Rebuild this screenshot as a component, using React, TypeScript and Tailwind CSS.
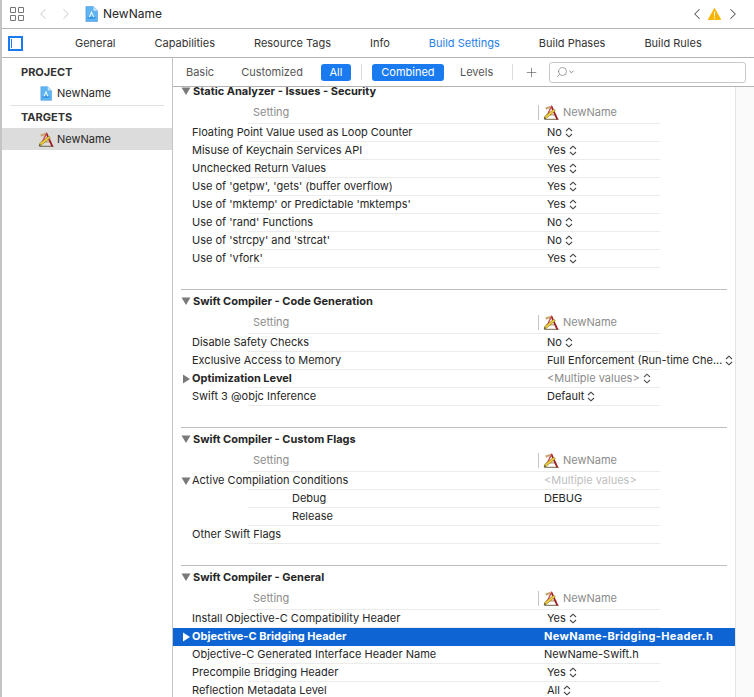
import { ChevronLeft, ChevronRight, Plus, Search } from 'lucide-react'

type Row = {
  label: string
  value?: string
  popup?: boolean
  bold?: boolean
  arrow?: 'right' | 'down'
  muted?: 'dim' | 'faint'
  indent?: boolean
  selected?: boolean
}

type Section = { title: string; rows: Row[] }

const yesNo = (label: string, value: string): Row => ({ label, value, popup: true })

const SECTIONS: Section[] = [
  {
    title: 'Static Analyzer - Issues - Security',
    rows: [
      yesNo('Floating Point Value used as Loop Counter', 'No'),
      yesNo('Misuse of Keychain Services API', 'Yes'),
      yesNo('Unchecked Return Values', 'Yes'),
      yesNo("Use of 'getpw', 'gets' (buffer overflow)", 'Yes'),
      yesNo("Use of 'mktemp' or Predictable 'mktemps'", 'Yes'),
      yesNo("Use of 'rand' Functions", 'No'),
      yesNo("Use of 'strcpy' and 'strcat'", 'No'),
      yesNo("Use of 'vfork'", 'Yes'),
    ],
  },
  {
    title: 'Swift Compiler - Code Generation',
    rows: [
      yesNo('Disable Safety Checks', 'No'),
      yesNo('Exclusive Access to Memory', 'Full Enforcement (Run-time Che...'),
      { label: 'Optimization Level', value: '<Multiple values>', popup: true, bold: true, arrow: 'right', muted: 'dim' },
      yesNo('Swift 3 @objc Inference', 'Default'),
    ],
  },
  {
    title: 'Swift Compiler - Custom Flags',
    rows: [
      { label: 'Active Compilation Conditions', value: '<Multiple values>', arrow: 'down', muted: 'faint' },
      { label: 'Debug', value: 'DEBUG', indent: true },
      { label: 'Release', indent: true },
      { label: 'Other Swift Flags' },
    ],
  },
  {
    title: 'Swift Compiler - General',
    rows: [
      yesNo('Install Objective-C Compatibility Header', 'Yes'),
      { label: 'Objective-C Bridging Header', value: 'NewName-Bridging-Header.h', bold: true, arrow: 'right', selected: true },
      { label: 'Objective-C Generated Interface Header Name', value: 'NewName-Swift.h' },
      yesNo('Precompile Bridging Header', 'Yes'),
      yesNo('Reflection Metadata Level', 'All'),
    ],
  },
]

function HammerIcon({ className }: { className?: string }) {
  return (
    <svg viewBox="0 0 18 18" className={className}>
      <path d="M1.5 16.2h15" stroke="#6b5a3a" strokeWidth="1" />
      <path d="M3.2 11.5h11" stroke="#b9a27a" strokeWidth="1.4" />
      <path d="M9.4 1.2 L16.3 16.4 L14.2 16.4 L8.2 3.2 Z" fill="#9c1c22" />
      <path d="M8.4 1.6 L3.8 12 L5 12.5 L9.8 2.4 Z" fill="#c9454a" />
      <path d="M1.2 15.9 L2 12.9 L11.6 5.4 L13 7.1 L3.6 15 Z" fill="#f2cf3a" stroke="#7d6a1c" strokeWidth="0.6" />
      <path d="M1.2 15.9 L2 13.6 L3 15 Z" fill="#333" />
      <path d="M2.4 3.8 L7.6 2.2 L8.4 3.6 L3.4 6 Z" fill="#c7a56e" />
    </svg>
  )
}

function ProjectIcon({ className }: { className?: string }) {
  return (
    <svg viewBox="0 0 14 17" className={className}>
      <path d="M1 0.5h8l4.5 4.5v11.5H1Z" fill="#5fb4f2" stroke="#3d93de" strokeWidth="0.6" />
      <path d="M9 0.5v4.5h4.5Z" fill="#c7e5fb" />
      <path d="M2.8 13.5h8.4v-2H2.8Z" fill="#2f8ee0" />
      <path d="M7 5 L4 12 h1.3 L7 8.2 L8.7 12 H10Z" fill="#eaf6ff" />
    </svg>
  )
}

function UpDown({ className }: { className?: string }) {
  return (
    <svg viewBox="0 0 8 11" fill="none" stroke="currentColor" strokeWidth="1.1" className={`w-[8px] h-[11px] ${className ?? ''}`}>
      <path d="M1 4 L4 1.2 L7 4" />
      <path d="M1 7 L4 9.8 L7 7" />
    </svg>
  )
}

function Arrow({ dir, white }: { dir: 'right' | 'down'; white?: boolean }) {
  const fill = white ? '#ffffff' : '#7a7a7a'
  return (
    <svg viewBox="0 0 10 10" className="w-[10px] h-[10px]">
      {dir === 'right' ? <path d="M2 0.5 L9 5 L2 9.5 Z" fill={fill} /> : <path d="M0.5 1.5 L9.5 1.5 L5 9 Z" fill={fill} />}
    </svg>
  )
}

function SettingRow({ row }: { row: Row }) {
  const valueColor = row.selected
    ? 'text-white font-bold pl-[15px] tracking-[0.35px]'
    : row.muted === 'dim'
      ? 'text-[#8a8a8a] pl-[18px]'
      : row.muted === 'faint'
        ? 'text-[#c0c0c0] pl-[15px]'
        : row.popup
          ? 'text-[#262626] pl-[18px]'
          : 'text-[#262626] pl-[15px]'

  return (
    <div className={`flex flex-col h-[18px] ${row.selected ? 'bg-[#0d64d2]' : ''}`}>
      <div className="flex items-center h-[17px]">
        <div className="w-[19px] shrink-0 pl-[8px] flex items-center">
          {row.arrow && <Arrow dir={row.arrow} white={row.selected} />}
        </div>
        <div
          className={`w-[337px] shrink-0 whitespace-nowrap ${row.indent ? 'pl-[100px]' : ''} ${
            row.bold ? 'font-bold' : ''
          } ${row.selected ? 'text-white' : 'text-[#262626]'}`}
        >
          {row.label}
        </div>
        <div className={`flex items-center gap-[3px] whitespace-nowrap ${valueColor}`}>
          {row.value}
          {row.popup && <UpDown className={row.muted === 'dim' ? 'text-[#555]' : 'text-[#444]'} />}
        </div>
      </div>
      <div className={`h-px ml-[75px] w-[412px] shrink-0 ${row.selected ? '' : 'bg-[#ececec]'}`} />
    </div>
  )
}

function SettingsSection({ section, first }: { section: Section; first: boolean }) {
  return (
    <div>
      {!first && <div className="h-px ml-[8px] w-[546px] bg-[#bdbdbd]" />}
      <div className="flex items-center h-[22px]">
        <div className="w-[20px] shrink-0 pl-[8px] flex items-center">
          <Arrow dir="down" />
        </div>
        <span className="font-bold text-[#262626]">{section.title}</span>
      </div>
      <div className="flex flex-col h-[22px]">
        <div className="flex items-center h-[21px]">
          <div className="w-[80px] shrink-0" />
          <div className="w-[285px] shrink-0 text-[#8c8c8c]">Setting</div>
          <div className="w-px h-[15px] bg-[#c4c4c4] shrink-0" />
          <HammerIcon className="w-[17px] h-[17px] ml-[4px] shrink-0" />
          <span className="ml-[3px] text-[#8c8c8c]">NewName</span>
        </div>
        <div className="h-px ml-[75px] w-[412px] bg-[#ececec]" />
      </div>
      {section.rows.map((row) => (
        <SettingRow key={row.label} row={row} />
      ))}
      <div className="h-[21px]" />
    </div>
  )
}

const TABS = ['General', 'Capabilities', 'Resource Tags', 'Info', 'Build Settings', 'Build Phases', 'Build Rules']

export default function App() {
  return (
    <div className="w-[754px] h-[697px] overflow-hidden bg-white flex flex-col border-l-2 border-[#c4c4c4] text-[11px] leading-none font-['Inter','Liberation_Sans',sans-serif] text-[#262626]">
      {/* Top jump bar */}
      <div className="h-[29px] shrink-0 flex items-center border-b border-[#b3b3b3] pl-[8px] pr-[12px]">
        <svg viewBox="0 0 14 14" className="w-[14px] h-[14px]" fill="none" stroke="#777" strokeWidth="1">
          <path d="M0.5 0.5h5v5h-5ZM8.5 0.5h5v5h-5ZM0.5 8.5h5v5h-5ZM8.5 8.5h5v5h-5Z" />
        </svg>
        <ChevronLeft size={18} strokeWidth={1.3} className="ml-[10px] text-[#c6c6c6]" />
        <ChevronRight size={18} strokeWidth={1.3} className="ml-[5px] text-[#c6c6c6]" />
        <ProjectIcon className="ml-[10px] w-[13px] h-[16px]" />
        <span className="ml-[5px] text-[12px]">NewName</span>
        <div className="ml-auto flex items-center">
          <ChevronLeft size={18} strokeWidth={1.4} className="text-[#555]" />
          <svg viewBox="0 0 14 13" className="w-[13px] h-[12px] ml-[2px]">
            <path d="M7 0.5 L13.7 12.5 H0.3 Z" fill="#f7b500" stroke="#f7b500" strokeLinejoin="round" />
            <path d="M6.3 4h1.4l-0.2 5h-1ZM6.3 10h1.4v1.3h-1.4Z" fill="#fff" />
          </svg>
          <ChevronRight size={18} strokeWidth={1.4} className="ml-[3px] text-[#555]" />
        </div>
      </div>

      {/* Editor tabs */}
      <div className="h-[29px] shrink-0 flex items-center border-b border-[#b3b3b3] pl-[6px]">
        <div className="w-[15px] h-[15px] border-2 border-[#1a7bf0] flex items-stretch pl-[1px] py-[1px]">
          <div className="w-px bg-[#1a7bf0]" />
        </div>
        <div className="ml-[52px] flex items-center gap-[39px]">
          {TABS.map((tab) => (
            <span key={tab} className={tab === 'Build Settings' ? 'text-[#1f80e8]' : 'text-[#333]'}>
              {tab}
            </span>
          ))}
        </div>
      </div>

      <div className="flex-1 min-h-0 flex">
        {/* Navigator */}
        <div className="w-[170px] shrink-0">
          <div className="pl-[19px] pt-[7px] h-[22px] font-bold text-[#333] flex items-center">PROJECT</div>
          <div className="h-[24px] flex items-center pl-[38px] mt-[1px]">
            <ProjectIcon className="w-[12px] h-[15px]" />
            <span className="ml-[5px]">NewName</span>
          </div>
          <div className="h-px ml-[8px] w-[154px] bg-[#e2e2e2]" />
          <div className="pl-[19px] h-[22px] font-bold text-[#333] flex items-center">TARGETS</div>
          <div className="h-[22px] flex items-center pl-[36px] bg-[#dcdcdc]">
            <HammerIcon className="w-[17px] h-[17px] shrink-0" />
            <span className="ml-[2px]">NewName</span>
          </div>
        </div>

        <div className="flex-1 min-w-0 flex flex-col border-l border-[#c4c4c4]">
          {/* Filter bar */}
          <div className="h-[29px] shrink-0 flex items-center border-b border-[#b3b3b3] pl-[13px]">
            <span className="text-[#555]">Basic</span>
            <span className="ml-[27px] text-[#555]">Customized</span>
            <span className="ml-[18px] w-[30px] h-[17px] rounded-[3px] bg-[#1a7bf0] text-white flex items-center justify-center">All</span>
            <div className="ml-[10px] w-px h-[16px] bg-[#dcdcdc]" />
            <span className="ml-[10px] w-[72px] h-[17px] rounded-[3px] bg-[#1a7bf0] text-white flex items-center justify-center">Combined</span>
            <span className="ml-[16px] text-[#555]">Levels</span>
            <div className="ml-[19px] w-px h-[16px] bg-[#dcdcdc]" />
            <Plus size={15} strokeWidth={1} className="ml-[11px] text-[#555]" />
            <div className="ml-[10px] w-[197px] h-[21px] rounded-[3px] border border-[#c8c8c8] flex items-center pl-[6px]">
              <Search size={12} strokeWidth={1.2} className="text-[#666] -scale-x-100" />
              <svg viewBox="0 0 6 4" className="w-[5px] h-[4px] ml-[1px]" fill="none" stroke="#666">
                <path d="M0.5 0.5 L3 3 L5.5 0.5" />
              </svg>
            </div>
          </div>

          {/* Settings table */}
          <div className="flex-1 min-h-0 flex overflow-hidden">
            <div className="w-[562px] shrink-0 -mt-[7px]">
              {SECTIONS.map((section, i) => (
                <SettingsSection key={section.title} section={section} first={i === 0} />
              ))}
            </div>
            <div className="flex-1 border-l border-[#e4e4e4] bg-[#fafafa]" />
          </div>
        </div>
      </div>
    </div>
  )
}
